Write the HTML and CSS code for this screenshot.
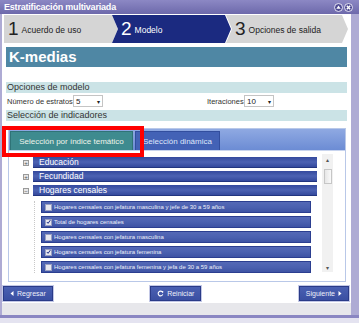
FILE: index.html
```html
<!DOCTYPE html>
<html lang="es">
<head>
    <meta charset="UTF-8">
    <meta name="viewport" content="width=device-width, initial-scale=1.0">
    <title>Estratificación multivariada</title>
    <link rel="stylesheet" href="styles.css">
</head>
<body>
<div class="window">
    <div class="titlebar">
        <span class="title">Estratificación multivariada</span>
        <span class="win-btns">
            <svg width="9" height="9" viewBox="0 0 9 9"><circle cx="4.5" cy="4.5" r="4" fill="#4f4b93" stroke="#e6e4f4" stroke-width="1"/><path d="M2.3 5.8 L4.5 2.6 L6.7 5.8 Z" fill="#fff"/></svg>
            <svg width="9" height="9" viewBox="0 0 9 9"><circle cx="4.5" cy="4.5" r="4" fill="#4f4b93" stroke="#e6e4f4" stroke-width="1"/><path d="M2.8 2.8 L6.2 6.2 M6.2 2.8 L2.8 6.2" stroke="#fff" stroke-width="1.4"/></svg>
        </span>
    </div>

    <div class="frame">
        <div class="content">
            <!-- pasos del asistente -->
            <div class="steps">
                <div class="step step-first"><span class="num">1</span><span class="label">Acuerdo de uso</span></div>
                <div class="step step-active"><span class="num">2</span><span class="label">Modelo</span></div>
                <div class="step step-last"><span class="num">3</span><span class="label">Opciones de salida</span></div>
            </div>

            <div class="header">K-medias</div>

            <div class="band band-first">Opciones de modelo</div>
            <div class="params">
                <span class="param-label">Número de estratos</span>
                <div class="select"><span>5</span><span class="caret">▾</span></div>
                <span class="param-label param-right">Iteraciones</span>
                <div class="select"><span>10</span><span class="caret">▾</span></div>
            </div>
            <div class="band band-second">Selección de indicadores</div>

            <div class="tabbox">
                <div class="tabstrip">
                    <div class="tab tab-active">Selección por índice temático</div>
                    <div class="tab">Selección dinámica</div>
                </div>
                <div class="panel">
                    <div class="tree">
                        <div class="node">
                            <span class="toggle">+</span>
                            <div class="bar">Educación</div>
                        </div>
                        <div class="node">
                            <span class="toggle">+</span>
                            <div class="bar">Fecundidad</div>
                        </div>
                        <div class="node">
                            <span class="toggle">−</span>
                            <div class="bar">Hogares censales</div>
                        </div>
                        <div class="children">
                            <div class="leaf"><span class="check"></span>Hogares censales con jefatura masculina y jefe de 30 a 59 años</div>
                            <div class="leaf"><span class="check checked"><svg width="6" height="6" viewBox="0 0 6 6"><path d="M1 3 L2.5 4.6 L5.2 0.8" fill="none" stroke="#1d2f86" stroke-width="1.2"/></svg></span>Total de hogares censales</div>
                            <div class="leaf"><span class="check"></span>Hogares censales con jefatura masculina</div>
                            <div class="leaf"><span class="check checked"><svg width="6" height="6" viewBox="0 0 6 6"><path d="M1 3 L2.5 4.6 L5.2 0.8" fill="none" stroke="#1d2f86" stroke-width="1.2"/></svg></span>Hogares censales con jefatura femenina</div>
                            <div class="leaf"><span class="check"></span>Hogares censales con jefatura femenina y jefa de 30 a 59 años</div>
                        </div>
                    </div>
                    <div class="scroll">
                        <span class="arrow">▴</span>
                        <span class="thumb"></span>
                        <span class="arrow arrow-down">▾</span>
                    </div>
                </div>
                <!-- recuadro de resaltado -->
                <div class="highlight"></div>
            </div>

            <div class="buttons">
                <a href="#" class="btn"><svg width="4" height="5" viewBox="0 0 4 5"><path d="M3.5 0 L0.5 2.5 L3.5 5 Z" fill="#fff"/></svg>Regresar</a>
                <a href="#" class="btn"><svg width="7" height="7" viewBox="0 0 7 7"><path d="M5.6 2.2 A2.4 2.4 0 1 0 5.8 4.4" fill="none" stroke="#fff" stroke-width="1.1"/><path d="M4.2 1.2 L6.3 1.1 L6 3.2 Z" fill="#fff"/></svg>Reiniciar</a>
                <a href="#" class="btn">Siguiente<svg width="4" height="5" viewBox="0 0 4 5"><path d="M0.5 0 L3.5 2.5 L0.5 5 Z" fill="#fff"/></svg></a>
            </div>
            <div class="statusbar"></div>
        </div>
    </div>
    <div class="bottom-edge"></div>
</div>
</body>
</html>
```

FILE: styles.css
```css
body {
    margin: 0;
    background: #fff;
    font-family: "Liberation Sans", Arial, sans-serif;
    color: #333;
}

.window {
    width: 359px;
    height: 323px;
    display: flex;
    flex-direction: column;
    overflow: hidden;
    background: #e4e3f0;
}

.titlebar {
    height: 14px;
    flex: none;
    display: flex;
    align-items: center;
    justify-content: space-between;
    padding: 0 6px 0 4px;
    background: linear-gradient(#8c88c4, #6d69ab);
    color: #fff;
}

.title {
    font-size: 9px;
    font-weight: bold;
    letter-spacing: -0.2px;
}

.win-btns {
    display: flex;
    gap: 1px;
}

.win-btns svg {
    display: block;
}

.frame {
    height: 301px;
    flex: none;
    display: flex;
    border-left: 2px solid #aeabd4;
    border-right: 8px solid #aeabd4;
}

.content {
    flex: 1;
    display: flex;
    flex-direction: column;
    background: #fff;
    min-width: 0;
}

/* pasos */
.steps {
    height: 28px;
    padding: 1px 0 0 2px;
    display: flex;
}

.step {
    height: 28px;
    display: flex;
    align-items: center;
    background: #d5d5d5;
    color: #222;
    clip-path: polygon(0 0, calc(100% - 6px) 0, 100% 50%, calc(100% - 6px) 100%, 0 100%, 6px 50%);
    padding-left: 9px;
    box-sizing: border-box;
    white-space: nowrap;
}

.step-first {
    width: 114px;
    padding-left: 4px;
    clip-path: polygon(0 0, calc(100% - 6px) 0, 100% 50%, calc(100% - 6px) 100%, 0 100%);
}

.step-active {
    width: 119px;
    margin-left: -6px;
    background: #1b2a80;
    color: #fff;
}

.step-last {
    width: 122px;
    margin-left: -5px;
}

.num {
    font-size: 19px;
    margin-right: 3px;
}

.label {
    font-size: 8.5px;
    padding-top: 2px;
}

.header {
    margin: 4px 4px 0 4px;
    height: 20px;
    line-height: 20px;
    padding-left: 3px;
    background: #4f87a4;
    color: #fff;
    font-size: 15px;
    font-weight: bold;
}

.band {
    margin: 0 4px;
    height: 11px;
    line-height: 11px;
    padding-left: 1px;
    background: #cbe3e6;
    font-size: 9px;
    color: #333;
}

.band-first {
    margin-top: 15px;
}

.band-second {
    margin-top: 1px;
}

.params {
    height: 16px;
    margin: 0 4px;
    display: flex;
    align-items: center;
    font-size: 7.5px;
    color: #333;
    white-space: nowrap;
}

.param-label {
    width: 66px;
    flex: none;
    padding-left: 1px;
}

.param-right {
    width: 37px;
    margin-left: 103px;
}

.select {
    width: 30px;
    height: 12px;
    flex: none;
    box-sizing: border-box;
    border: 1px solid #c4c4c4;
    display: flex;
    align-items: center;
    justify-content: space-between;
    padding: 0 2px;
    font-size: 8px;
    color: #222;
}

.caret {
    font-size: 6px;
}

/* pestañas */
.tabbox {
    position: relative;
    margin: 7px 5px 0 6px;
    height: 154px;
    box-sizing: border-box;
    border: 1px solid #b9c8e8;
    display: flex;
    flex-direction: column;
}

.tabstrip {
    height: 21px;
    flex: none;
    display: flex;
    align-items: flex-end;
    gap: 2px;
    padding-left: 1px;
    background: linear-gradient(#8fa9e2, #6c8cd4);
}

.tab {
    height: 19px;
    line-height: 19px;
    box-sizing: border-box;
    padding: 0 7px;
    font-size: 8px;
    color: #dfe6fb;
    background: #4362b6;
    border: 1px solid #324e9e;
    border-bottom: none;
}

.tab-active {
    width: 123px;
    text-align: center;
    background: #3e8b8f;
    border-color: #2f7377;
    color: #eef4ea;
}

.panel {
    flex: 1;
    display: flex;
    overflow: hidden;
    background: #fff;
    border-top: 1px solid #c8d4ee;
}

.tree {
    flex: 1;
    padding: 6px 0 0 14px;
    display: flex;
    flex-direction: column;
    gap: 3px;
    overflow: hidden;
}

.node {
    display: flex;
    align-items: center;
    gap: 4px;
}

.toggle {
    width: 6px;
    height: 6px;
    box-sizing: border-box;
    border: 1px solid #999;
    background: #e6e6e6;
    font-size: 6px;
    line-height: 4px;
    text-align: center;
    color: #555;
}

.bar {
    flex: 1;
    height: 11px;
    line-height: 11px;
    box-sizing: border-box;
    padding-left: 6px;
    font-size: 8.5px;
    color: #fff;
    background: linear-gradient(#34499d, #4c62b2 50%, #34499d);
    border-bottom: 1px solid #22357f;
}

.children {
    margin: 2px 6px 0 11px;
    padding-left: 6px;
    border-left: 1px dotted #c8c8c8;
    display: flex;
    flex-direction: column;
    gap: 3px;
}

.leaf {
    height: 12px;
    box-sizing: border-box;
    display: flex;
    align-items: center;
    padding-left: 3px;
    font-size: 6px;
    color: #eef0fa;
    white-space: nowrap;
    overflow: hidden;
    background: linear-gradient(#5468b6, #4b61b0 50%, #3e53a4);
    border: 1px solid #2b3e90;
}

.check {
    width: 7px;
    height: 7px;
    flex: none;
    box-sizing: border-box;
    margin-right: 2px;
    background: #e8e8ef;
    border: 1px solid #9aa0c0;
    display: flex;
    align-items: center;
    justify-content: center;
}

.check svg {
    display: block;
}

.scroll {
    width: 11px;
    margin: 3px 12px 9px 5px;
    background: #f1f1f1;
    display: flex;
    flex-direction: column;
    align-items: center;
    font-size: 6px;
    color: #555;
}

.arrow {
    height: 10px;
    line-height: 12px;
}

.thumb {
    width: 8px;
    height: 15px;
    margin-top: 5px;
    box-sizing: border-box;
    border: 1px solid #c6c6c6;
    background: linear-gradient(to right, #e6e6e6, #fafafa);
}

.arrow-down {
    margin-top: auto;
}

.highlight {
    position: absolute;
    left: -7px;
    top: -3px;
    width: 142px;
    height: 31px;
    box-sizing: border-box;
    border: 4px solid #ff0000;
}

/* botones */
.buttons {
    margin: 4px 2px 0 1px;
    height: 15px;
    display: flex;
    justify-content: space-between;
}

.btn {
    display: flex;
    align-items: center;
    gap: 3px;
    height: 15px;
    box-sizing: border-box;
    padding: 0 6px;
    text-decoration: none;
    font-size: 7px;
    color: #eef0fa;
    background: linear-gradient(#4a60b2, #3a4fa2);
    border: 1px solid #2a3b88;
    box-shadow: 0 0 0 1px #c3c8e6;
}

.btn svg {
    display: block;
}

.statusbar {
    margin-top: 2px;
    flex: 1;
    background: #e7e7eb;
}

.bottom-edge {
    height: 3px;
    flex: none;
    background: #8a86c2;
}
```
